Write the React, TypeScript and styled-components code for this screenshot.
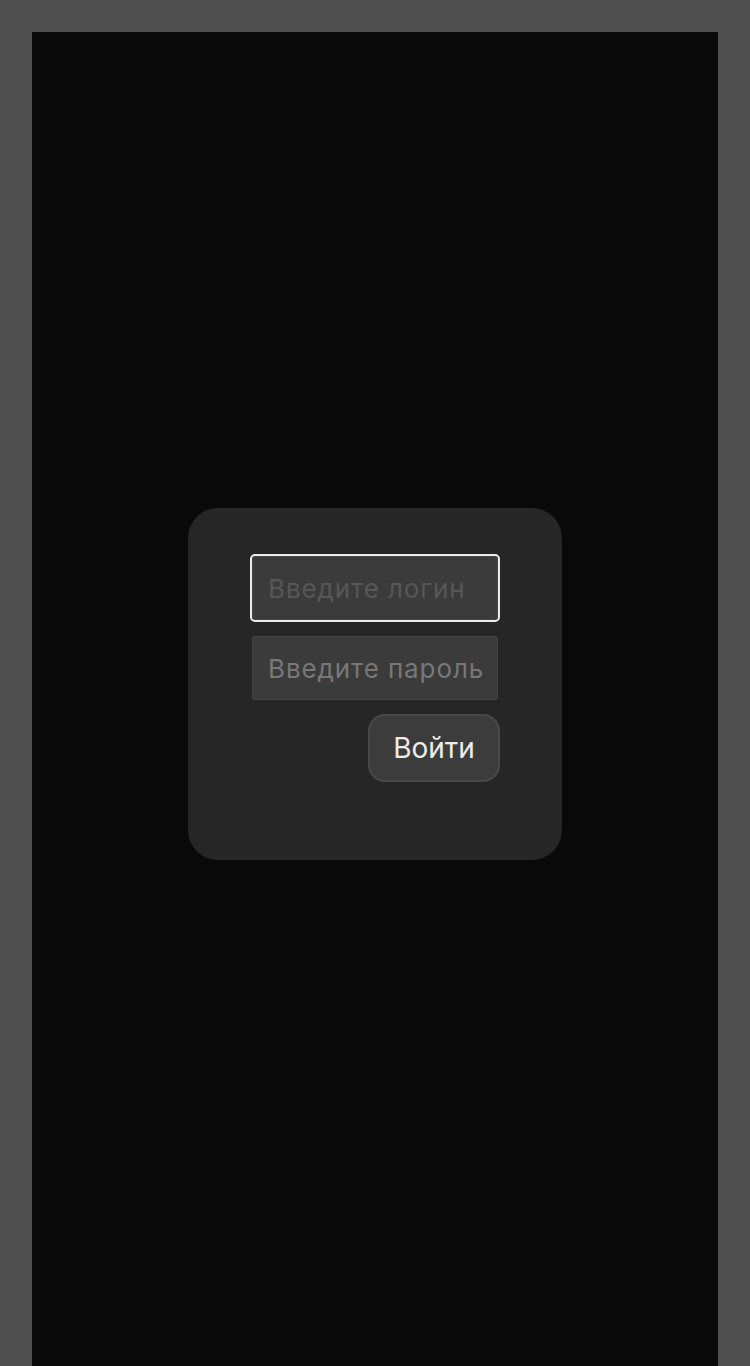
import React from "react";
import styled, { createGlobalStyle } from "styled-components";

const Global = createGlobalStyle`
  html, body { margin: 0; padding: 0; }
  body {
    background: #4f4f4f;
    font-family: Inter, "Noto Sans", sans-serif;
    padding: 32px 32px 0;
  }
`;

const Page = styled.div`
  height: calc(100vh - 32px);
  box-sizing: border-box;
  padding-bottom: 30px;
  background: #090909;
  display: flex;
  align-items: center;
  justify-content: center;
`;

const Card = styled.form`
  width: 374px;
  box-sizing: border-box;
  padding: 48px 64px 78px;
  background: #262626;
  border-radius: 30px;
  display: flex;
  flex-direction: column;
`;

const Field = styled.input<{ $focused?: boolean; $ph: string }>`
  width: 246px;
  height: 64px;
  box-sizing: border-box;
  padding: 0 15px;
  background: #3b3b3b;
  border: 1px solid #454545;
  border-radius: 3px;
  font-family: Inter, "Noto Sans", sans-serif;
  font-size: 26px;
  letter-spacing: 0.9px;
  color: #eee;
  outline: ${(p) => (p.$focused ? "2px solid #ececec" : "none")};
  outline-offset: 0;
  &::placeholder { color: ${(p) => p.$ph}; }
  & + & { margin-top: 16px; }
`;

const Submit = styled.button`
  align-self: flex-end;
  margin-top: 14px;
  margin-right: -2px;
  width: 132px;
  height: 68px;
  box-sizing: border-box;
  background: #3c3c3c;
  border: 2px solid #494949;
  border-radius: 17px;
  color: #ececec;
  font-family: Inter, "Noto Sans", sans-serif;
  font-size: 28px;
  padding: 0;
  cursor: pointer;
`;

export default function App() {
  return (
    <>
      <Global />
      <Page>
        <Card onSubmit={(e) => e.preventDefault()}>
          <Field $focused $ph="#575757" placeholder="Введите логин" />
          <Field $ph="#787878" type="password" placeholder="Введите пароль" />
          <Submit type="submit">Войти</Submit>
        </Card>
      </Page>
    </>
  );
}
